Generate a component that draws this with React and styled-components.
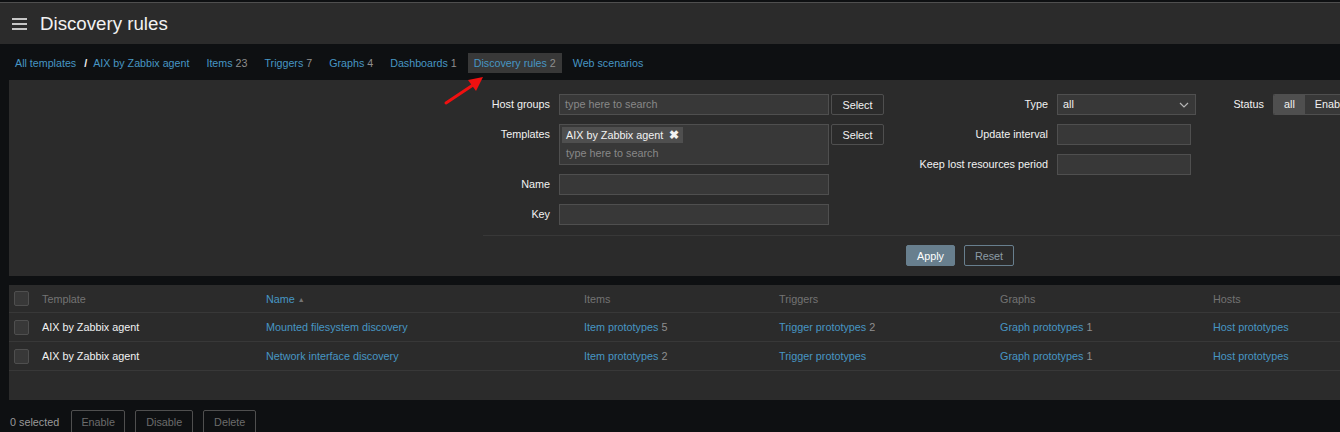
import styled, { createGlobalStyle } from "styled-components";

const GlobalStyle = createGlobalStyle`
  html, body {
    margin: 0;
    padding: 0;
    background: #0e1012;
    overflow: hidden;
  }
  body {
    font-family: "Liberation Sans", Arial, sans-serif;
    font-size: 10.8px;
    color: #f2f2f2;
  }
`;

const Page = styled.div`
  position: relative;
  width: 1340px;
  height: 432px;
  padding-top: 2px;
  box-sizing: border-box;
  overflow: hidden;
`;

const Header = styled.header`
  height: 41px;
  border-top: 1px solid #4f4f4f;
  background: #2b2b2b;
  display: flex;
  align-items: center;
  padding-left: 12px;
`;

const Burger = styled.span`
  display: flex;
  flex-direction: column;
  gap: 3px;
  width: 15px;
  margin-right: 13px;
  span {
    height: 2px;
    background: #c6c6c6;
  }
`;

const Title = styled.h1`
  margin: 0;
  font-size: 18.7px;
  font-weight: normal;
  color: #f2f2f2;
`;

const Nav = styled.nav`
  display: flex;
  align-items: center;
  padding: 9px 0 7px 9px;
  gap: 5px;
  font-size: 10.7px;
`;

const Crumb = styled.a`
  height: 20px;
  line-height: 20px;
  padding: 0 6px;
  color: #4796c4;
  text-decoration: none;
  background: ${({ $active }) => ($active ? "#383838" : "transparent")};
  white-space: nowrap;
`;

const Slash = styled.span`
  color: #f2f2f2;
  font-weight: bold;
  margin: 0 -5px 0 -3px;
`;

const Count = styled.span`
  color: #8f8f8f;
`;

const Arrow = styled.svg`
  position: absolute;
  left: 436px;
  top: 68px;
`;

const FilterPanel = styled.section`
  margin-left: 9px;
  background: #2b2b2b;
`;

const FilterBody = styled.div`
  display: flex;
  padding-top: 14px;
`;

const FilterColumn = styled.div`
  display: grid;
  grid-template-columns: ${({ $label }) => $label}px auto;
  grid-auto-rows: min-content;
  row-gap: 9px;
  align-items: start;
`;

const Label = styled.label`
  text-align: right;
  padding-right: 9px;
  line-height: 21px;
  color: #f2f2f2;
  white-space: nowrap;
`;

const Field = styled.div`
  display: flex;
  gap: 2px;
  align-items: flex-start;
`;

const Input = styled.div`
  box-sizing: border-box;
  width: ${({ $w }) => $w}px;
  min-height: 21px;
  background: #383838;
  border: 1px solid #4f4f4f;
  padding: 0 5px;
  line-height: 19px;
  color: #f2f2f2;
`;

const Placeholder = styled.span`
  color: #888;
`;

const MultiBox = styled(Input)`
  height: 41px;
  padding: 2px 2px 0;
  line-height: 16px;
  display: flex;
  flex-direction: column;
  align-items: flex-start;
  gap: 1px;
  ${Placeholder} {
    padding-left: 4px;
    line-height: 18px;
  }
`;

const Chip = styled.span`
  display: inline-flex;
  align-items: center;
  gap: 6px;
  height: 16px;
  padding: 0 4px;
  background: #4f4f4f;
  color: #f2f2f2;
`;

const ChipX = styled.span`
  font-weight: bold;
  font-size: 12px;
`;

const SideButton = styled.button`
  box-sizing: border-box;
  width: 53px;
  height: 21px;
  background: #2b2b2b;
  border: 1px solid #4f4f4f;
  border-radius: 2px;
  color: #f2f2f2;
  font: inherit;
  padding: 0;
`;

const Dropdown = styled(Input)`
  display: flex;
  justify-content: space-between;
  align-items: center;
  padding-right: 6px;
`;

const Segmented = styled.div`
  display: flex;
  height: 21px;
  border: 1px solid #4f4f4f;
  border-right: 0;
  border-radius: 2px 0 0 2px;
  box-sizing: border-box;
  overflow: hidden;
`;

const Segment = styled.span`
  line-height: 19px;
  padding: 0 10px;
  background: ${({ $active }) => ($active ? "#4f4f4f" : "#383838")};
  color: #f2f2f2;
  white-space: nowrap;
`;

const FilterFooter = styled.div`
  margin: 10px 0 0 474px;
  border-top: 1px solid #383838;
  padding: 9px 0 10px 423px;
  display: flex;
  gap: 9px;
`;

const FilterButton = styled.button`
  box-sizing: border-box;
  height: 21px;
  width: ${({ $w }) => $w}px;
  border-radius: 2px;
  font: inherit;
  border: 1px solid #687f8e;
  background: ${({ $primary }) => ($primary ? "#687f8e" : "transparent")};
  color: ${({ $primary }) => ($primary ? "#ffffff" : "#8c9ba6")};
  padding: 0;
`;

const Table = styled.section`
  margin: 9px 0 0 9px;
  background: #2b2b2b;
  padding-bottom: 29px;
`;

const Row = styled.div`
  display: grid;
  grid-template-columns: 28px 224px 318px 195px 221px 213px 1fr;
  align-items: center;
  height: ${({ $head }) => ($head ? "27px" : "28px")};
  border-bottom: 1px solid #383838;
  color: ${({ $head }) => ($head ? "#737373" : "#f2f2f2")};
`;

const Cell = styled.div`
  padding: 0 5px;
  white-space: nowrap;
`;

const Check = styled.span`
  display: block;
  width: 13px;
  height: 13px;
  border: 1px solid #4f4f4f;
  border-radius: 2px;
  background: #383838;
`;

const Link = styled.a`
  color: #4796c4;
  text-decoration: none;
`;

const Sort = styled.span`
  font-size: 7px;
  margin-left: 3px;
  vertical-align: 1px;
`;

const ActionBar = styled.div`
  display: flex;
  align-items: center;
  gap: 10px;
  margin-top: 10px;
  padding-left: 10px;
`;

const Selected = styled.span`
  color: #999;
  margin-right: 2px;
`;

const ActionButton = styled.button`
  box-sizing: border-box;
  height: 24px;
  width: ${({ $w }) => $w}px;
  background: transparent;
  border: 1px solid #4f4f4f;
  border-radius: 2px;
  color: #6c6c6c;
  font: inherit;
  padding: 0;
`;

const tabs = [
  ["Items", "23"],
  ["Triggers", "7"],
  ["Graphs", "4"],
  ["Dashboards", "1"],
  ["Discovery rules", "2", true],
  ["Web scenarios"],
];

const rules = [
  { name: "Mounted filesystem discovery", items: "5", triggers: "2", graphs: "1" },
  { name: "Network interface discovery", items: "2", triggers: "", graphs: "1" },
];

const Proto = ({ label, count }) => (
  <>
    <Link href="#">{label}</Link>
    {count && <Count> {count}</Count>}
  </>
);

export default function App() {
  return (
    <Page>
      <GlobalStyle />
      <Header>
        <Burger>
          <span />
          <span />
          <span />
        </Burger>
        <Title>Discovery rules</Title>
      </Header>

      <Nav>
        <Crumb href="#">All templates</Crumb>
        <Slash>/</Slash>
        <Crumb href="#">AIX by Zabbix agent</Crumb>
        {tabs.map(([label, count, active]) => (
          <Crumb key={label} href="#" $active={active}>
            {label}
            {count && <Count> {count}</Count>}
          </Crumb>
        ))}
      </Nav>

      <FilterPanel>
        <FilterBody>
          <FilterColumn $label={550}>
            <Label>Host groups</Label>
            <Field>
              <Input $w={270}>
                <Placeholder>type here to search</Placeholder>
              </Input>
              <SideButton>Select</SideButton>
            </Field>
            <Label>Templates</Label>
            <Field>
              <MultiBox $w={270}>
                <Chip>
                  AIX by Zabbix agent <ChipX>✖</ChipX>
                </Chip>
                <Placeholder>type here to search</Placeholder>
              </MultiBox>
              <SideButton>Select</SideButton>
            </Field>
            <Label>Name</Label>
            <Input $w={270} />
            <Label>Key</Label>
            <Input $w={270} />
          </FilterColumn>

          <FilterColumn $label={173}>
            <Label>Type</Label>
            <Dropdown $w={139}>
              all
              <svg width="10" height="6" viewBox="0 0 10 6">
                <path d="M1 1l4 4 4-4" fill="none" stroke="#b5b5b5" strokeWidth="1.2" />
              </svg>
            </Dropdown>
            <Label>Update interval</Label>
            <Input $w={134} />
            <Label>Keep lost resources period</Label>
            <Input $w={134} />
          </FilterColumn>

          <FilterColumn $label={77}>
            <Label>Status</Label>
            <Segmented>
              <Segment $active>all</Segment>
              <Segment>Enabled</Segment>
            </Segmented>
          </FilterColumn>
        </FilterBody>

        <FilterFooter>
          <FilterButton $primary $w={49}>Apply</FilterButton>
          <FilterButton $w={50}>Reset</FilterButton>
        </FilterFooter>
      </FilterPanel>

      <Table>
        <Row $head>
          <Cell><Check /></Cell>
          <Cell>Template</Cell>
          <Cell>
            <Link href="#">Name</Link>
            <Sort>▲</Sort>
          </Cell>
          <Cell>Items</Cell>
          <Cell>Triggers</Cell>
          <Cell>Graphs</Cell>
          <Cell>Hosts</Cell>
        </Row>
        {rules.map((r) => (
          <Row key={r.name}>
            <Cell><Check /></Cell>
            <Cell>AIX by Zabbix agent</Cell>
            <Cell><Link href="#">{r.name}</Link></Cell>
            <Cell><Proto label="Item prototypes" count={r.items} /></Cell>
            <Cell><Proto label="Trigger prototypes" count={r.triggers} /></Cell>
            <Cell><Proto label="Graph prototypes" count={r.graphs} /></Cell>
            <Cell><Link href="#">Host prototypes</Link></Cell>
          </Row>
        ))}
      </Table>

      <ActionBar>
        <Selected>0 selected</Selected>
        <ActionButton $w={54}>Enable</ActionButton>
        <ActionButton $w={58}>Disable</ActionButton>
        <ActionButton $w={53}>Delete</ActionButton>
      </ActionBar>

      <Arrow width="56" height="44" viewBox="0 0 56 44">
        <line x1="10" y1="35" x2="40" y2="15" stroke="#f01010" strokeWidth="3" strokeLinecap="round" />
        <polygon points="47,9 32,12 40,23" fill="#f01010" />
      </Arrow>
    </Page>
  );
}
